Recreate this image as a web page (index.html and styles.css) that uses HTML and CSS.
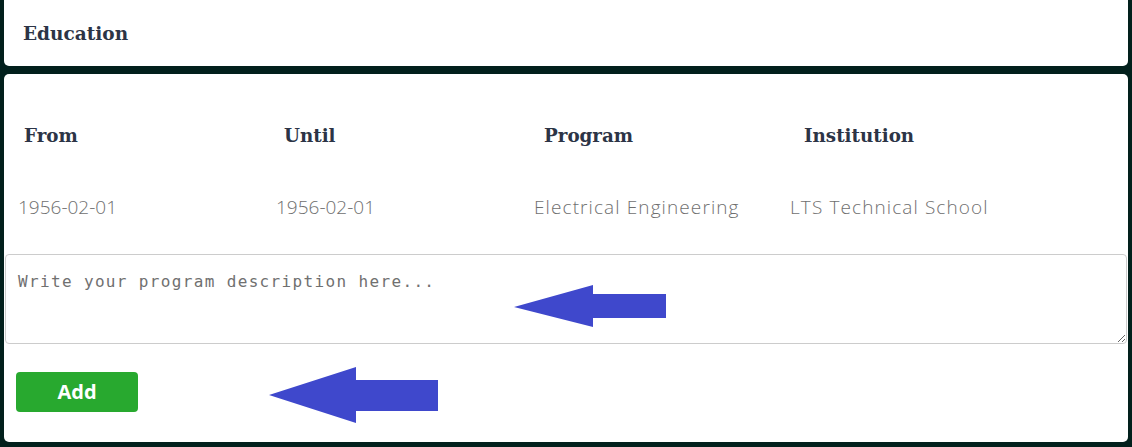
FILE: index.html
```html
<!DOCTYPE html>
<html lang="en">
<head>
<meta charset="utf-8">
<title>Education</title>
<link rel="stylesheet" href="styles.css">
</head>
<body>
  <div class="page">
    <section class="card card-title">
      <h2 class="title">Education</h2>
    </section>
    <section class="card card-main">
      <div class="table-head">
        <div class="th">From</div>
        <div class="th">Until</div>
        <div class="th">Program</div>
        <div class="th">Institution</div>
      </div>
      <div class="table-row">
        <div class="td">1956-02-01</div>
        <div class="td">1956-02-01</div>
        <div class="td td-text">Electrical Engineering</div>
        <div class="td td-text">LTS Technical School</div>
      </div>
      <textarea class="desc" placeholder="Write your program description here..."></textarea>
      <button class="btn-add" type="button">Add</button>

      <svg class="arrow arrow-one" width="152" height="42" viewBox="0 0 152 42">
        <polygon points="0,22 79,0 79,9 152,9 152,33 79,33 79,42" fill="#3f48cc"/>
      </svg>
      <svg class="arrow arrow-two" width="169" height="56" viewBox="0 0 169 56">
        <polygon points="0,28 87,0 87,13 169,13 169,44 87,44 87,56" fill="#3f48cc"/>
      </svg>
    </section>
  </div>
</body>
</html>
```

FILE: styles.css
```css
html, body {
  margin: 0;
  padding: 0;
  background: #02201c;
}

.page {
  display: flex;
  flex-direction: column;
  gap: 8px;
  padding: 0 4px;
  height: 447px;
  box-sizing: border-box;
}

.card {
  background: #ffffff;
  box-sizing: border-box;
}

.card-title {
  height: 66px;
  border-radius: 0 0 5px 5px;
  padding: 22px 19px 0;
}

.title {
  margin: 0;
  font-family: "DejaVu Serif", Georgia, serif;
  font-weight: 700;
  font-size: 18.5px;
  line-height: 24px;
  color: #2c3446;
}

.card-main {
  position: relative;
  height: 368px;
  border-radius: 5px;
  padding: 51px 1px 0;
  display: flex;
  flex-direction: column;
}

.table-head {
  display: grid;
  grid-template-columns: 260px 260px 260px 1fr;
  padding-left: 19px;
}

.th {
  font-family: "DejaVu Serif", Georgia, serif;
  font-weight: 700;
  font-size: 18.3px;
  line-height: 22px;
  color: #2c3446;
}

.table-row {
  display: grid;
  grid-template-columns: 258px 258px 256px 1fr;
  padding-left: 13px;
  margin-top: 49px;
}

.td {
  font-family: "Open Sans", "Lato", sans-serif;
  font-weight: 300;
  font-size: 19px;
  line-height: 23px;
  color: #6f6f6f;
  white-space: nowrap;
}

.td-text {
  letter-spacing: 1.1px;
}

.desc {
  display: block;
  margin-top: 35px;
  height: 90px;
  width: 100%;
  box-sizing: border-box;
  border: 1px solid #cccccc;
  border-radius: 4px;
  padding: 17px 12px 0;
  font-family: "DejaVu Sans Mono", "Liberation Mono", monospace;
  font-size: 16px;
  line-height: 20px;
  letter-spacing: 1.35px;
  color: #333;
  resize: vertical;
  outline: none;
}

.desc::placeholder {
  color: #707070;
  opacity: 1;
}

.btn-add {
  align-self: flex-start;
  margin: 28px 0 0 11px;
  width: 122px;
  height: 40px;
  border: none;
  border-radius: 4px;
  background: #28a92f;
  color: #ffffff;
  font-family: "Open Sans", "Liberation Sans", sans-serif;
  font-weight: 700;
  font-size: 20px;
  line-height: 40px;
  padding: 0;
  cursor: pointer;
}

.arrow {
  position: absolute;
  display: block;
}

.arrow-one {
  left: 510px;
  top: 211px;
}

.arrow-two {
  left: 265px;
  top: 293px;
}
```
